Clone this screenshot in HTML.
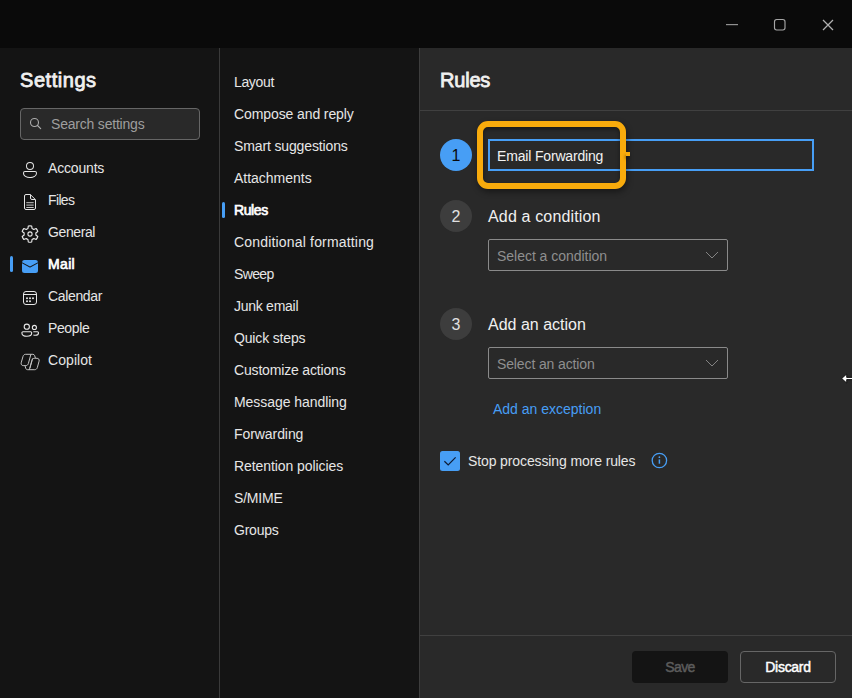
<!DOCTYPE html>
<html lang="en">
<head>
<meta charset="utf-8">
<title>Settings</title>
<style>
*{box-sizing:border-box;margin:0;padding:0}
html,body{width:852px;height:698px;overflow:hidden;background:#0a0a0a;font-family:"Liberation Sans",sans-serif;color:#fff}
.abs{position:absolute}
#titlebar{left:0;top:0;width:852px;height:48px;background:#0a0a0a}
#left{left:0;top:48px;width:219px;height:650px;background:#141414}
#div1{left:219px;top:48px;width:1px;height:650px;background:#3a3a3a}
#mid{left:220px;top:48px;width:199px;height:650px;background:#141414}
#div2{left:419px;top:48px;width:1px;height:650px;background:#3d3d3d}
#right{left:420px;top:48px;width:432px;height:650px;background:#292929}
.t{position:absolute;white-space:nowrap;line-height:20px;height:20px}
h1.t{font-size:20px;font-weight:normal;-webkit-text-stroke:0.8px currentColor;line-height:28px;height:28px;color:#f0f0f0}
.nav{font-size:14px;color:#e6e6e6}
.sub{font-size:14px;color:#e6e6e6}
.b{font-weight:normal;-webkit-text-stroke:0.7px currentColor;color:#fff}
.ind{position:absolute;width:3px;height:16px;border-radius:2px;background:#479ef5}
.stepc{width:32px;height:32px;border-radius:50%;background:#3d3d3d;color:#e0e0e0;font-size:16px;line-height:32px;padding-top:1px;text-align:center}
.lbl{font-size:16px;color:#f0f0f0;line-height:22px;height:22px}
.dd{width:240px;height:32px;border:1px solid #8a8a8a;border-radius:2px;background:#292929}
.ph{font-size:14px;color:#8f8f8f}
.btn{width:96px;height:32px;border-radius:4px;font-size:14px;font-weight:normal;-webkit-text-stroke:0.45px currentColor;line-height:32px;text-align:center}
svg{position:absolute;overflow:visible}
</style>
</head>
<body>
<div id="titlebar" class="abs">
  <svg style="left:726px;top:16px" width="16" height="16" viewBox="0 0 16 16"><path d="M0 8.600h12" stroke="#909090" stroke-width="1.2" fill="none"/></svg>
  <svg style="left:773px;top:18px" width="14" height="14" viewBox="0 0 14 14"><rect x="1.5" y="1.5" width="10.5" height="10.5" rx="2.200" stroke="#a6a6a6" stroke-width="1.15" fill="none"/></svg>
  <svg style="left:822px;top:19px" width="12" height="12" viewBox="0 0 12 12"><path d="M1 1l10 10M11 1L1 11" stroke="#b0b0b0" stroke-width="1.25" fill="none"/></svg>
</div>

<div id="left" class="abs"></div>
<div id="div1" class="abs"></div>
<div id="mid" class="abs"></div>
<div id="div2" class="abs"></div>
<div id="right" class="abs"></div>

<!-- LEFT -->
<h1 class="t" style="left:20px;top:66px;letter-spacing:0.55px">Settings</h1>
<div class="abs" style="left:20px;top:108px;width:180px;height:32px;border:1px solid #666;border-radius:4px;background:#292929"></div>
<svg style="left:29px;top:117px" width="14" height="14" viewBox="0 0 14 14"><circle cx="5.5" cy="5.5" r="4" stroke="#adadad" stroke-width="1.1" fill="none"/><path d="M8.500 8.500l3.200 3.200" stroke="#adadad" stroke-width="1.1" stroke-linecap="round"/></svg>
<div class="t" style="left:51px;top:114px;font-size:14px;color:#9e9e9e;letter-spacing:-0.200px">Search settings</div>

<div class="t nav" style="left:48px;top:158px;letter-spacing:-0.175px">Accounts</div>
<div class="t nav" style="left:48px;top:190px;letter-spacing:-0.640px">Files</div>
<div class="t nav" style="left:48px;top:222px;letter-spacing:-0.400px">General</div>
<div class="ind" style="left:10px;top:256px"></div>
<div class="t nav b" style="left:48px;top:254px;letter-spacing:0.35px">Mail</div>
<div class="t nav" style="left:48px;top:286px;letter-spacing:-0.350px">Calendar</div>
<div class="t nav" style="left:48px;top:318px;letter-spacing:-0.383px">People</div>
<div class="t nav" style="left:48px;top:350px;letter-spacing:0.071px">Copilot</div>


<!-- nav icons -->
<svg class="ic" style="left:20px;top:160px" width="20" height="20" viewBox="0 0 20 20"><path fill="#e6e6e6" d="M10 2a4 4 0 1 0 0 8 4 4 0 0 0 0-8ZM7 6a3 3 0 1 1 6 0 3 3 0 0 1-6 0Zm-2 5a2 2 0 0 0-2 2c0 1.700.830 2.970 2.130 3.800A9.140 9.140 0 0 0 10 18c1.850 0 3.580-.390 4.870-1.200A4.350 4.350 0 0 0 17 13a2 2 0 0 0-2-2H5Zm-1 2a1 1 0 0 1 1-1h10a1 1 0 0 1 1 1c0 1.300-.620 2.280-1.670 2.950A8.160 8.160 0 0 1 10 17a8.160 8.160 0 0 1-4.330-1.050A3.360 3.360 0 0 1 4 13Z"/></svg>
<svg class="ic" style="left:20px;top:192px" width="20" height="20" viewBox="0 0 20 20"><g fill="none" stroke="#e6e6e6" stroke-width="1"><path d="M6 2.500h4.300l5.200 5.200V16a1.500 1.500 0 0 1-1.500 1.500H6A1.500 1.500 0 0 1 4.500 16V4A1.500 1.500 0 0 1 6 2.500Z"/><path d="M10.500 2.700V6a1.500 1.500 0 0 0 1.500 1.500h3.300"/><path stroke-width="0.85" d="M6.300 10.700h7.400M6.300 13.100h7.400M6.300 15.500h7.400"/></g></svg>
<svg class="ic" style="left:20px;top:224px" width="20" height="20" viewBox="0 0 20 20"><path id="gear" fill="none" stroke="#e6e6e6" stroke-width="1.15" stroke-linejoin="round" d="M7.98 4.46L8.30 1.98A8.2 8.2 0 0 1 11.70 1.98L12.02 4.46A5.9 5.9 0 0 1 13.79 5.48L16.09 4.51A8.2 8.2 0 0 1 17.80 7.47L15.81 8.98A5.9 5.9 0 0 1 15.81 11.02L17.80 12.53A8.2 8.2 0 0 1 16.09 15.49L13.79 14.52A5.9 5.9 0 0 1 12.02 15.54L11.70 18.02A8.2 8.2 0 0 1 8.30 18.02L7.98 15.54A5.9 5.9 0 0 1 6.21 14.52L3.91 15.49A8.2 8.2 0 0 1 2.20 12.53L4.19 11.02A5.9 5.9 0 0 1 4.19 8.98L2.20 7.47A8.2 8.2 0 0 1 3.91 4.51L6.21 5.48A5.9 5.9 0 0 1 7.98 4.46 Z"/><circle cx="10" cy="10" r="2.1" fill="none" stroke="#e6e6e6" stroke-width="1.1"/></svg>
<svg class="ic" style="left:20px;top:256px" width="20" height="20" viewBox="0 0 20 20"><path fill="#479ef5" d="M18 7.370V14.500a2.500 2.500 0 0 1-2.500 2.500h-11A2.500 2.500 0 0 1 2 14.500V7.370l7.770 4.070c.140.080.320.080.460 0L18 7.370ZM15.500 4A2.500 2.500 0 0 1 18 6.250l-8 4.190-8-4.190A2.500 2.500 0 0 1 4.500 4h11Z"/></svg>
<svg class="ic" style="left:20px;top:288px" width="20" height="20" viewBox="0 0 20 20"><g fill="none" stroke="#e6e6e6" stroke-width="1"><rect x="3.500" y="3.500" width="13" height="13" rx="2.500"/><path d="M3.500 6.500h13"/></g><g fill="#e6e6e6"><circle cx="7" cy="10.200" r="1"/><circle cx="10" cy="10.200" r="1"/><circle cx="13" cy="10.200" r="1"/><circle cx="7" cy="13.300" r="1"/><circle cx="10" cy="13.300" r="1"/></g></svg>
<svg class="ic" style="left:20px;top:320px" width="20" height="20" viewBox="0 0 20 20"><g fill="none" stroke="#e6e6e6" stroke-width="1.1"><circle cx="6.800" cy="6.700" r="2.600"/><path d="M2.900 11.800h7.800a1 1 0 0 1 1 1v.200c0 2.200-2 3.300-4.900 3.300s-4.900-1.100-4.900-3.300v-.200a1 1 0 0 1 1-1Z"/><circle cx="14.400" cy="7.400" r="2.050"/><path d="M13.300 11.800h4.200a1 1 0 0 1 1 1v.100c0 1.500-1.300 2.300-3.300 2.300-.700 0-1.300-.100-1.800-.250"/></g></svg>
<svg class="ic" style="left:20px;top:352px" width="20" height="20" viewBox="0 0 20 20"><g fill="none" stroke="#c4c4c4" stroke-width="1" stroke-linejoin="round"><path d="M5.600 2.300h7.200c.900 0 1.600.500 1.900 1.400l.800 2.600h1.600c1.500 0 2.400 1.300 2 2.800l-1.800 6.500c-.400 1.300-1.300 2.100-2.600 2.100H7.600c-.900 0-1.600-.500-1.900-1.400l-.700-2.700H3.200c-1.500 0-2.400-1.300-2-2.800l1.800-6.400C3.400 3.100 4.300 2.300 5.600 2.300Z"/><path d="M10.900 2.300 8.400 11.400c-.400 1.400-1.300 2.200-2.600 2.200H5"/><path d="M9.400 17.700l2.500-9.200c.400-1.400 1.300-2.200 2.600-2.200h1"/><path d="M12.600 6.400l-2.700 9.700"/></g></svg>

<!-- MID -->
<div class="t sub" style="left:234px;top:72px;letter-spacing:-0.350px">Layout</div>
<div class="t sub" style="left:234px;top:104px;letter-spacing:-0.100px">Compose and reply</div>
<div class="t sub" style="left:234px;top:136px;letter-spacing:-0.135px">Smart suggestions</div>
<div class="t sub" style="left:234px;top:168px;letter-spacing:-0.018px">Attachments</div>
<div class="ind" style="left:222px;top:202px"></div>
<div class="t sub b" style="left:234px;top:200px;letter-spacing:-0.4px">Rules</div>
<div class="t sub" style="left:234px;top:232px;letter-spacing:0.177px">Conditional formatting</div>
<div class="t sub" style="left:234px;top:264px;letter-spacing:-0.640px">Sweep</div>
<div class="t sub" style="left:234px;top:296px;letter-spacing:-0.270px">Junk email</div>
<div class="t sub" style="left:234px;top:328px;letter-spacing:-0.164px">Quick steps</div>
<div class="t sub" style="left:234px;top:360px;letter-spacing:-0.171px">Customize actions</div>
<div class="t sub" style="left:234px;top:392px;letter-spacing:-0.056px">Message handling</div>
<div class="t sub" style="left:234px;top:424px;letter-spacing:-0.070px">Forwarding</div>
<div class="t sub" style="left:234px;top:456px;letter-spacing:-0.078px">Retention policies</div>
<div class="t sub" style="left:234px;top:488px;letter-spacing:-0.183px">S/MIME</div>
<div class="t sub" style="left:234px;top:520px;letter-spacing:-0.233px">Groups</div>

<!-- RIGHT -->
<h1 class="t" style="left:440px;top:66px;letter-spacing:-0.2px">Rules</h1>
<div class="abs" style="left:420px;top:110px;width:432px;height:1px;background:#404040"></div>

<!-- step 1 -->
<div class="abs stepc" style="left:440px;top:139px;background:#479ef5;color:#0a0a0a">1</div>
<div class="abs" style="left:488px;top:139px;width:326px;height:32px;border:2px solid #479ef5;background:#292929"></div>
<div class="t" style="left:497px;top:146px;font-size:14px;color:#f2f2f2;letter-spacing:-0.169px">Email Forwarding</div>
<div class="abs" style="left:477px;top:121px;width:149px;height:68px;border:6px solid #f8ab0c;border-radius:11px;box-shadow:1px 3px 6px rgba(0,0,0,.42), inset 0 2px 4px rgba(0,0,0,.42)"></div>
<div class="abs" style="left:626px;top:152px;width:4px;height:4px;background:#f8ab0c;box-shadow:-1px 3px 3px rgba(0,0,0,.35)"></div>

<!-- step 2 -->
<div class="abs stepc" style="left:440px;top:200px">2</div>
<div class="t lbl" style="left:488px;top:206px;letter-spacing:0.153px">Add a condition</div>
<div class="abs dd" style="left:488px;top:239px"></div>
<div class="t ph" style="left:497px;top:246px;letter-spacing:-0.028px">Select a condition</div>
<svg style="left:705px;top:250px" width="14" height="10" viewBox="0 0 14 10"><path d="M1 2l6 6 6-6" stroke="#949494" stroke-width="0.85" fill="none"/></svg>

<!-- step 3 -->
<div class="abs stepc" style="left:440px;top:308px">3</div>
<div class="t lbl" style="left:488px;top:314px">Add an action</div>
<div class="abs dd" style="left:488px;top:347px"></div>
<div class="t ph" style="left:497px;top:354px;letter-spacing:-0.125px">Select an action</div>
<svg style="left:705px;top:358px" width="14" height="10" viewBox="0 0 14 10"><path d="M1 2l6 6 6-6" stroke="#949494" stroke-width="0.85" fill="none"/></svg>
<div class="t" style="left:493px;top:399px;font-size:14px;color:#479ef5">Add an exception</div>

<!-- checkbox -->
<div class="abs" style="left:440px;top:451px;width:20px;height:20px;border-radius:2.500px;background:#479ef5"></div>
<svg style="left:440px;top:451px" width="20" height="20" viewBox="0 0 20 20"><path d="M4.4 10.3l3.8 3.6 7.4-7.6" stroke="#0f1b33" stroke-width="1.2" fill="none"/></svg>
<div class="t" style="left:468px;top:451px;font-size:14px;color:#e6e6e6;letter-spacing:-0.115px">Stop processing more rules</div>
<svg style="left:651px;top:452px" width="17" height="17" viewBox="0 0 17 17"><circle cx="8.4" cy="8.5" r="7.2" stroke="#479ef5" stroke-width="1.3" fill="none"/><path d="M8.4 7.4v4.3" stroke="#479ef5" stroke-width="1.5"/><circle cx="8.4" cy="5.2" r="0.9" fill="#479ef5"/></svg>

<!-- footer -->
<div class="abs" style="left:420px;top:635px;width:432px;height:1px;background:#404040"></div>
<div class="abs btn" style="left:632px;top:651px;background:#141414;color:#5c5c5c;letter-spacing:-0.6px">Save</div>
<div class="abs btn" style="left:740px;top:651px;background:#292929;color:#fff;border:1px solid #666;line-height:30px;letter-spacing:-0.3px">Discard</div>

<!-- cursor -->
<svg style="left:841px;top:373px" width="11" height="11" viewBox="0 0 11 11"><path d="M0.700 5.500L5.700 1v3.400h6v2.200h-6V10z" fill="#fff" stroke="#0a0a0a" stroke-width="0.9" stroke-linejoin="round"/></svg>

</body>
</html>
